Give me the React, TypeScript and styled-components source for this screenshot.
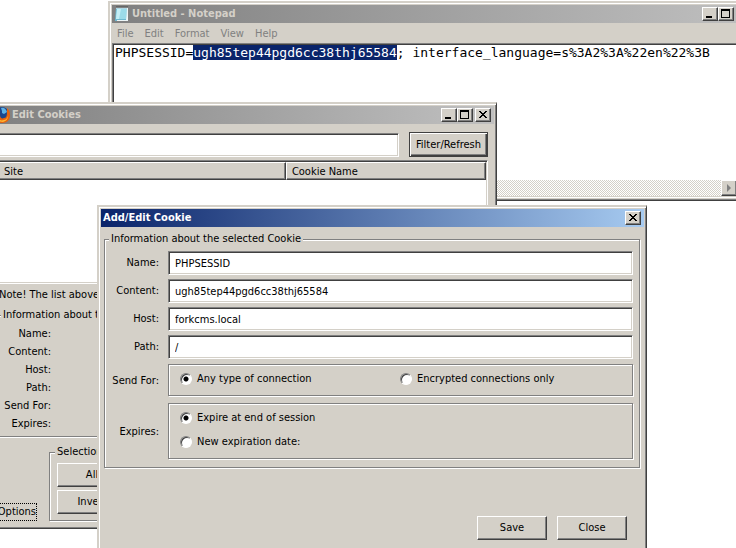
import React from "react";
import styled, { createGlobalStyle, css } from "styled-components";

const face = "#d4d0c8";
const shade = "#808080";
const dark = "#404040";

const GlobalStyle = createGlobalStyle`
  * { box-sizing: border-box; }
  body { margin: 0; background: #fff; }
  body, button, input, table, legend {
    font-family: "DejaVu Sans Condensed", "DejaVu Sans", sans-serif;
    font-size: 11px;
    line-height: 14px;
    color: #000;
  }
`;

const raised = css`
  border: 1px solid;
  border-color: #fff ${dark} ${dark} #fff;
  box-shadow: inset -1px -1px 0 ${shade};
`;

const sunken = css`
  border: 1px solid;
  border-color: ${shade} #fff #fff ${shade};
  box-shadow: inset 1px 1px 0 ${dark}, inset -1px -1px 0 ${face};
`;

const etched = css`
  border: 1px solid ${shade};
  box-shadow: 1px 1px 0 #fff, inset 1px 1px 0 #fff;
`;

const Desktop = styled.main`
  position: relative;
  min-height: 100vh;
  overflow: hidden;
`;

const Window = styled.section`
  position: absolute;
  display: flex;
  flex-direction: column;
  padding: 2px;
  background: ${face};
  border: 2px solid;
  border-color: ${face} ${dark} ${dark} ${face};
  border-width: 2px 1px 1px 2px;
  box-shadow: inset 1px 1px 0 #fff, inset -1px -1px 0 ${shade};
`;

const NotepadWindow = styled(Window)`
  top: 1px;
  left: 108px;
  right: -22px;
`;

const CookiesWindow = styled(Window)`
  top: 102px;
  left: -12px;
  right: 239px;
`;

const CookieDialog = styled(Window)`
  top: 205px;
  left: 97px;
  right: 89px;
`;

const TitleBar = styled.header<{ $active?: boolean }>`
  display: flex;
  align-items: center;
  gap: 2px;
  height: 18px;
  padding: 0 3px 0 2px;
  color: ${(p) => (p.$active ? "#fff" : face)};
  background: ${(p) =>
    p.$active
      ? "linear-gradient(90deg, #0a246a, #a6caf0)"
      : "linear-gradient(90deg, #808080, #c0c0c0)"};
`;

const Title = styled.h1`
  flex: 1;
  margin: 0;
  font-size: 11px;
  font-weight: bold;
  line-height: 14px;
  white-space: nowrap;
`;

const Controls = styled.div`
  display: flex;
`;

const ControlButton = styled.button<{ $apart?: boolean }>`
  ${raised}
  display: grid;
  place-items: center;
  width: 16px;
  height: 14px;
  margin-left: ${(p) => (p.$apart ? "2px" : "0")};
  padding: 0;
  background: ${face};
`;

const MenuBar = styled.nav`
  display: flex;
  gap: 11px;
  padding: 3px 5px 2px;
`;

const MenuItem = styled.button`
  padding: 0;
  border: 0;
  background: none;
  color: ${shade};
  line-height: 15px;
`;

const Editor = styled.div`
  ${sunken}
  display: grid;
  grid-template-columns: 1fr 16px;
  grid-template-rows: 135px 16px;
  padding: 1px;
  background: ${face};
`;

const EditorText = styled.div`
  padding: 0 1px;
  background: #fff;
  font-family: "DejaVu Sans Mono", monospace;
  font-size: 13px;
  line-height: 15px;
  white-space: pre;
  overflow: hidden;
  outline: none;
`;

const Selected = styled.mark`
  background: #0a246a;
  color: #fff;
`;

const Track = styled.div<{ $across?: boolean }>`
  display: flex;
  justify-content: flex-end;
  align-items: ${(p) => (p.$across ? "stretch" : "flex-end")};
  background: repeating-conic-gradient(#fff 0 25%, ${face} 0 50%) 0 0 / 2px 2px;
`;

const ScrollButton = styled.button`
  ${raised}
  display: grid;
  place-items: center;
  width: 16px;
  height: 16px;
  padding: 0;
  background: ${face};
`;

const CookiesBody = styled.div`
  display: flex;
  flex-direction: column;
  padding: 8px 6px 5px 4px;
`;

const FilterRow = styled.form`
  display: flex;
  align-items: flex-end;
  gap: 10px;
  margin-bottom: 3px;
`;

const TextField = styled.input`
  ${sunken}
  flex: 1;
  min-width: 0;
  width: 100%;
  height: 24px;
  padding: 0 6px;
  border-radius: 0;
  background: #fff;
  outline: none;
`;

const PushButton = styled.button<{ $default?: boolean }>`
  ${raised}
  width: ${(p) => (p.$default ? "79px" : "70px")};
  height: 24px;
  padding: 0;
  background: ${face};
  white-space: nowrap;
  ${(p) =>
    p.$default &&
    css`
      height: 25px;
      border-color: ${dark};
      box-shadow: inset 1px 1px 0 #fff, inset -1px -1px 0 ${dark}, inset -2px -2px 0 ${shade};
    `}
`;

const List = styled.div`
  ${sunken}
  height: 124px;
  padding: 1px;
  background: #fff;
`;

const ListTable = styled.table`
  width: 100%;
  table-layout: fixed;
  border-collapse: separate;
  border-spacing: 0;
`;

const HeaderCell = styled.th<{ $share: string }>`
  ${raised}
  width: ${(p) => p.$share};
  height: 18px;
  padding: 1px 5px 0;
  background: ${face};
  font-weight: normal;
  text-align: left;
`;

const Note = styled.p`
  margin: 4px 0 6px 3px;
`;

const Group = styled.fieldset`
  ${etched}
  min-width: 0;
  margin: 0;
  padding: 5px 6px 6px;
`;

const DetailGroup = styled(Group)`
  padding: 3px 6px 3px;
`;

const SelectionGroup = styled(Group)`
  padding: 4px 7px 6px;
`;

const Legend = styled.legend`
  margin-left: -2px;
  padding: 0 2px;
  background: ${face};
`;

const Details = styled.dl`
  display: grid;
  grid-template-columns: 48px 1fr;
  margin: 0;
  line-height: 18px;
`;

const DetailName = styled.dt`
  text-align: right;
  white-space: nowrap;
`;

const DetailValue = styled.dd`
  margin: 0;
`;

const Footer = styled.div`
  display: flex;
  align-items: flex-end;
  gap: 12px;
  margin-top: 8px;
`;

const OptionsButton = styled.button`
  width: 41px;
  height: 18px;
  padding: 0;
  border: 1px dotted #000;
  background: none;
  text-align: right;
`;

const ButtonStack = styled.div`
  display: flex;
  flex-direction: column;
  gap: 3px;
`;

const DialogBody = styled.form`
  padding: 5px 4px 20px 3px;
`;

const Fields = styled.div`
  display: grid;
  grid-template-columns: 48px 1fr;
  align-items: center;
  gap: 4px 9px;
`;

const FieldLabel = styled.label`
  text-align: right;
  white-space: nowrap;
`;

const Choices = styled.div<{ $columns?: boolean }>`
  ${etched}
  display: grid;
  grid-template-columns: ${(p) => (p.$columns ? "220px 1fr" : "1fr")};
  gap: 10px 0;
  margin: 1px 0 2px;
  padding: 7px 11px 9px;
`;

const Choice = styled.label`
  display: flex;
  align-items: center;
  gap: 5px;
`;

const Radio = styled.input`
  appearance: none;
  width: 12px;
  height: 12px;
  margin: 0;
  border: 1px solid;
  border-color: ${shade} #fff #fff ${shade};
  border-radius: 50%;
  background: #fff;
  box-shadow: inset 1px 1px 0 ${dark};
  &:checked {
    background: radial-gradient(circle, #000 0 2px, #fff 3px);
  }
`;

const Actions = styled.div`
  display: flex;
  justify-content: flex-end;
  gap: 10px;
  margin-top: 48px;
  padding-right: 13px;
`;

const NotepadIcon = () => (
  <svg width="16" height="16" viewBox="0 0 16 16" aria-hidden="true">
    <path d="M2 2h11v12l-1 1H1z" fill="#6fb9d0" />
    <path d="M3 3h10l-1 10H2z" fill="#9bdbe9" />
    <path d="M3 3h4L5 13H2z" fill="#c4eef5" />
    <path d="M13 2h1v13H3v-1h9z" fill="#eef6f7" />
    <path d="M2 2h12" stroke="#eef6f7" />
    <path d="M3 0v2M5 0v2M7 0v2M9 0v2M11 0v2M13 0v2" stroke="#4b4b4b" />
  </svg>
);

const FirefoxIcon = () => (
  <svg width="16" height="16" viewBox="0 0 16 16" aria-hidden="true">
    <circle cx="8" cy="7" r="7" fill="#1c468c" />
    <path d="M7 1c3-1 5 1 6 4l-3 2-2-1V4z" fill="#5fb2e4" />
    <path
      d="M13 1c2 2 3 4 3 7 0 5-3 8-8 8s-8-3-8-8c0-2 1-5 3-6 0 2 1 3 3 3L6 8c0 3 2 4 4 3 2 0 3-2 3-5z"
      fill="#e8620c"
    />
    <path d="M14 5c1 4-1 8-4 8-3 1-6 0-8-3 1 4 4 5 7 5 4-1 6-4 5-10z" fill="#ffb833" />
  </svg>
);

const glyphs = {
  Minimize: <path d="M2 8h6v2H2z" />,
  Maximize: <path d="M1 1h9v9H1zM2 3v6h7V3z" fillRule="evenodd" />,
  Close: (
    <path d="M2 2h2v1h1v1h2V3h1V2h2v1H9v1H8v1H7v1h1v1h1v1h1v1H8V8H7V7H5v1H4v1H2V8h1V7h1V6h1V5H4V4H3V3H2z" />
  ),
};

type ControlName = keyof typeof glyphs;

const WindowControls = ({ names }: { names: ControlName[] }) => (
  <Controls>
    {names.map((name) => (
      <ControlButton
        key={name}
        type="button"
        aria-label={name}
        $apart={name === "Close" && names.length > 1}
      >
        <svg width="12" height="12" viewBox="0 0 12 12" shapeRendering="crispEdges">
          {glyphs[name]}
        </svg>
      </ControlButton>
    ))}
  </Controls>
);

const allControls: ControlName[] = ["Minimize", "Maximize", "Close"];
const menus = ["File", "Edit", "Format", "View", "Help"];
const details = ["Name:", "Content:", "Host:", "Path:", "Send For:", "Expires:"];
const fields = [
  { id: "name", label: "Name:", value: "PHPSESSID" },
  { id: "content", label: "Content:", value: "ugh85tep44pgd6cc38thj65584" },
  { id: "host", label: "Host:", value: "forkcms.local" },
  { id: "path", label: "Path:", value: "/" },
];

export default function App() {
  return (
    <Desktop>
      <GlobalStyle />

      <NotepadWindow aria-label="Notepad">
        <TitleBar>
          <NotepadIcon />
          <Title>Untitled - Notepad</Title>
          <WindowControls names={allControls} />
        </TitleBar>
        <MenuBar>
          {menus.map((menu) => (
            <MenuItem key={menu} type="button">
              {menu}
            </MenuItem>
          ))}
        </MenuBar>
        <Editor>
          <EditorText
            role="textbox"
            aria-label="Document"
            aria-multiline="true"
            contentEditable
            suppressContentEditableWarning
            spellCheck={false}
          >
            PHPSESSID=<Selected>ugh85tep44pgd6cc38thj65584</Selected>
            {"; interface_language=s%3A2%3A%22en%22%3B"}
          </EditorText>
          <Track />
          <Track $across>
            <ScrollButton type="button" aria-label="Scroll right">
              <svg width="5" height="8" viewBox="0 0 5 8">
                <path d="M0 0l4 4-4 4z" fill={shade} />
              </svg>
            </ScrollButton>
          </Track>
        </Editor>
      </NotepadWindow>

      <CookiesWindow aria-label="Edit Cookies">
        <TitleBar>
          <FirefoxIcon />
          <Title>Edit Cookies</Title>
          <WindowControls names={allControls} />
        </TitleBar>
        <CookiesBody>
          <FilterRow onSubmit={(e) => e.preventDefault()}>
            <TextField aria-label="Filter" />
            <PushButton $default>Filter/Refresh</PushButton>
          </FilterRow>
          <List>
            <ListTable>
              <thead>
                <tr>
                  <HeaderCell $share="59%">Site</HeaderCell>
                  <HeaderCell $share="41%">Cookie Name</HeaderCell>
                </tr>
              </thead>
            </ListTable>
          </List>
          <Note>Note! The list above</Note>
          <DetailGroup>
            <Legend>Information about the selected Cookie</Legend>
            <Details>
              {details.map((name) => (
                <React.Fragment key={name}>
                  <DetailName>{name}</DetailName>
                  <DetailValue />
                </React.Fragment>
              ))}
            </Details>
          </DetailGroup>
          <Footer>
            <OptionsButton type="button">Options</OptionsButton>
            <SelectionGroup>
              <Legend>Selection</Legend>
              <ButtonStack>
                <PushButton type="button">All</PushButton>
                <PushButton type="button">Invert</PushButton>
              </ButtonStack>
            </SelectionGroup>
          </Footer>
        </CookiesBody>
      </CookiesWindow>

      <CookieDialog role="dialog" aria-label="Add/Edit Cookie">
        <TitleBar $active>
          <Title>Add/Edit Cookie</Title>
          <WindowControls names={["Close"]} />
        </TitleBar>
        <DialogBody onSubmit={(e) => e.preventDefault()}>
          <Group>
            <Legend>Information about the selected Cookie</Legend>
            <Fields>
              {fields.map((field) => (
                <React.Fragment key={field.id}>
                  <FieldLabel htmlFor={field.id}>{field.label}</FieldLabel>
                  <TextField id={field.id} defaultValue={field.value} spellCheck={false} />
                </React.Fragment>
              ))}
              <FieldLabel as="span" id="send-for">
                Send For:
              </FieldLabel>
              <Choices $columns role="radiogroup" aria-labelledby="send-for">
                <Choice>
                  <Radio type="radio" name="send" defaultChecked />
                  Any type of connection
                </Choice>
                <Choice>
                  <Radio type="radio" name="send" />
                  Encrypted connections only
                </Choice>
              </Choices>
              <FieldLabel as="span" id="expires">
                Expires:
              </FieldLabel>
              <Choices role="radiogroup" aria-labelledby="expires">
                <Choice>
                  <Radio type="radio" name="expires" defaultChecked />
                  Expire at end of session
                </Choice>
                <Choice>
                  <Radio type="radio" name="expires" />
                  New expiration date:
                </Choice>
              </Choices>
            </Fields>
          </Group>
          <Actions>
            <PushButton type="submit">Save</PushButton>
            <PushButton type="button">Close</PushButton>
          </Actions>
        </DialogBody>
      </CookieDialog>
    </Desktop>
  );
}
